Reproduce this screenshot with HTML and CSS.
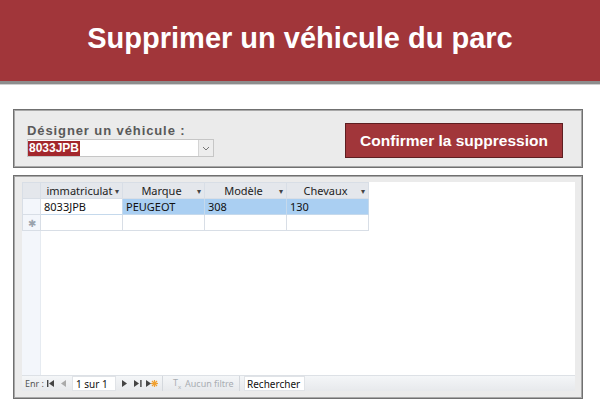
FILE: index.html
```html
<!DOCTYPE html>
<html lang="fr">
<head>
    <meta charset="UTF-8">
    <meta name="viewport" content="width=device-width, initial-scale=1.0">
    <title>Supprimer un véhicule du parc</title>
    <link rel="stylesheet" href="styles.css">
</head>
<body>
    <header class="bandeau">
        <h1>Supprimer un véhicule du parc</h1>
    </header>
    <div class="page">
        <div class="panneau choix">
            <div class="champ">
                <label>Désigner un véhicule :</label>
                <div class="liste">
                    <span class="valeur">8033JPB</span>
                    <span class="fleche">
                        <svg width="8" height="5" viewBox="0 0 8 5"><path d="M1 1 L4 4 L7 1" fill="none" stroke="#777" stroke-width="1"/></svg>
                    </span>
                </div>
            </div>
            <button class="confirmer">Confirmer la suppression</button>
        </div>

        <div class="panneau feuille">
            <div class="grille">
                <table>
                    <tr class="entete">
                        <th class="sel"></th>
                        <th>immatriculat <span class="tri">&#9662;</span></th>
                        <th>Marque <span class="tri">&#9662;</span></th>
                        <th>Modèle <span class="tri">&#9662;</span></th>
                        <th>Chevaux <span class="tri">&#9662;</span></th>
                    </tr>
                    <tr class="actif">
                        <td class="sel"></td>
                        <td class="focus">8033JPB</td>
                        <td>PEUGEOT</td>
                        <td>308</td>
                        <td>130</td>
                    </tr>
                    <tr class="nouveau">
                        <td class="sel">&#10033;</td>
                        <td></td>
                        <td></td>
                        <td></td>
                        <td></td>
                    </tr>
                </table>
            </div>
            <div class="nav">
                <span class="enr">Enr :</span>
                <span class="ico premier"><svg width="8" height="7" viewBox="0 0 8 7"><rect x="0" y="0" width="1.4" height="7" fill="#444"/><path d="M7 0 L2 3.5 L7 7 Z" fill="#444"/></svg></span>
                <span class="ico precedent"><svg width="6" height="7" viewBox="0 0 6 7"><path d="M5 0 L0 3.5 L5 7 Z" fill="#aaa"/></svg></span>
                <span class="pos">1 sur 1</span>
                <span class="ico suivant"><svg width="6" height="7" viewBox="0 0 6 7"><path d="M1 0 L6 3.5 L1 7 Z" fill="#444"/></svg></span>
                <span class="ico dernier"><svg width="8" height="7" viewBox="0 0 8 7"><path d="M0 0 L5 3.5 L0 7 Z" fill="#444"/><rect x="6.2" y="0" width="1.4" height="7" fill="#444"/></svg></span>
                <span class="ico ajout"><svg width="12" height="9" viewBox="0 0 12 9"><path d="M0 1 L5 4.5 L0 8 Z" fill="#444"/><g stroke="#f0a030" stroke-width="1.2"><path d="M8.5 1 V8"/><path d="M5 4.5 H12"/><path d="M6 2 L11 7"/><path d="M11 2 L6 7"/></g></svg></span>
                <span class="sep"></span>
                <span class="filtre"><span class="tx">T<sub>x</sub></span><span class="aucun">Aucun filtre</span></span>
                <span class="sep"></span>
                <span class="recherche">Rechercher</span>
            </div>
        </div>
    </div>
</body>
</html>
```

FILE: styles.css
```css
* {
    margin: 0;
    padding: 0;
    box-sizing: border-box;
}
body {
    background-color: white;
    font-family: "Liberation Sans", Arial, sans-serif;
}
.bandeau {
    background-color: #A1363A;
    height: 84px;
    display: flex;
    align-items: center;
    justify-content: center;
    border-bottom: 3px solid #8d8d8d;
    box-shadow: 0 1px 0 #d0d0d0;
}
.bandeau h1 {
    color: white;
    font-size: 29px;
    font-weight: bold;
    padding-bottom: 4px;
}
.page {
    padding: 25px 17px 0 13px;
}
.panneau {
    background-color: #EBEBEB;
    border: 1px solid #707070;
    box-shadow: inset 0 0 0 1px #a8a8a8;
}
.choix {
    height: 59px;
    display: flex;
    justify-content: space-between;
    align-items: flex-start;
    padding: 13px 19px 0 13px;
}
.champ label {
    display: block;
    color: #595959;
    font-weight: bold;
    font-size: 13px;
    letter-spacing: 0.9px;
    height: 16px;
}
.liste {
    width: 187px;
    height: 18px;
    background-color: white;
    border: 1px solid #c6c6c6;
    display: flex;
    align-items: center;
    justify-content: space-between;
}
.valeur {
    background-color: #A3272C;
    color: white;
    font-weight: bold;
    font-size: 12px;
    line-height: 15px;
    padding: 0 1px;
}
.fleche {
    width: 15px;
    height: 16px;
    border-left: 1px solid #d4d4d4;
    background-color: #ededed;
    display: flex;
    align-items: center;
    justify-content: center;
}
.confirmer {
    width: 218px;
    height: 35px;
    background-color: #A1363A;
    border: 1px solid #5e1e21;
    color: white;
    font-family: "Liberation Sans", Arial, sans-serif;
    font-weight: bold;
    font-size: 15.5px;
}
.feuille {
    margin-top: 7px;
    height: 224px;
    padding: 6px 7px 7px 8px;
    display: flex;
    flex-direction: column;
}
.grille {
    flex: 1;
    background: linear-gradient(to right, #F3F6FB 18px, #e6ebf1 18px, #e6ebf1 19px, white 19px);
    font-family: "Noto Sans", "Open Sans", sans-serif;
    font-size: 11px;
    color: #111;
}
table {
    border-collapse: collapse;
    table-layout: fixed;
}
th, td {
    width: 82px;
    height: 16px;
    border: 1px solid #d8dee6;
    padding: 0 3px;
    white-space: nowrap;
    overflow: hidden;
    font-weight: normal;
    line-height: 14px;
}
th.sel, td.sel {
    width: 18px;
    padding: 0;
    text-align: center;
}
.entete th {
    background-color: #E4E7EC;
    text-align: center;
    color: #222;
}
.tri {
    font-size: 8px;
    color: #444;
    float: right;
}
.actif td {
    background-color: #AACFF2;
    border-color: #c5d9ec;
}
.actif td.sel {
    background-color: #F3F6FB;
    border-color: #d8dee6;
}
.actif td.focus {
    background-color: white;
}
.nouveau td.sel {
    color: #9aa3ad;
    font-size: 10px;
    background-color: #F3F6FB;
}
.nav {
    height: 16px;
    background: linear-gradient(#f4f6f8, #e7e9ec);
    border-top: 1px solid #dde1e6;
    display: flex;
    align-items: center;
    font-family: "Noto Sans", "Open Sans", sans-serif;
    font-size: 9px;
    color: #555;
    white-space: nowrap;
}
.enr {
    padding-left: 3px;
    width: 25px;
    flex-shrink: 0;
}
.ico {
    display: flex;
    align-items: center;
    flex-shrink: 0;
}
.premier {
    margin-right: 6px;
}
.precedent {
    margin-right: 5px;
}
.pos {
    background-color: white;
    width: 44px;
    height: 15px;
    line-height: 14px;
    padding-left: 3px;
    margin-right: 5px;
    color: #111;
    font-size: 10px;
    border: 1px solid #e0e3e7;
    flex-shrink: 0;
}
.suivant {
    margin-right: 7px;
}
.dernier {
    margin-right: 4px;
}
.sep {
    width: 1px;
    height: 15px;
    background-color: #d4d8dd;
    margin: 0 10px 0 4px;
    flex-shrink: 0;
}
.filtre {
    color: #a9adb2;
    width: 66px;
    flex-shrink: 0;
    display: flex;
    align-items: center;
}
.filtre + .sep {
    margin: 0 4px 0 0;
}
.tx {
    font-size: 9px;
    width: 12px;
}
.tx sub {
    font-size: 6px;
}
.recherche {
    background-color: white;
    width: 61px;
    height: 15px;
    line-height: 14px;
    padding-left: 2px;
    color: #111;
    font-size: 10px;
    border: 1px solid #e0e3e7;
    flex-shrink: 0;
}
```
